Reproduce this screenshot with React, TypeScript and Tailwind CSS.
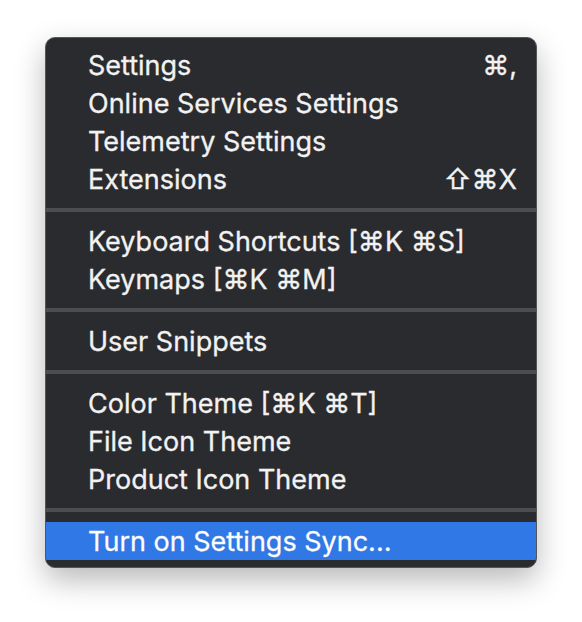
const groups: { label: string; shortcut?: string; active?: boolean }[][] = [
  [
    { label: 'Settings', shortcut: '⌘,' },
    { label: 'Online Services Settings' },
    { label: 'Telemetry Settings' },
    { label: 'Extensions', shortcut: '⇧⌘X' },
  ],
  [{ label: 'Keyboard Shortcuts [⌘K ⌘S]' }, { label: 'Keymaps [⌘K ⌘M]' }],
  [{ label: 'User Snippets' }],
  [{ label: 'Color Theme [⌘K ⌘T]' }, { label: 'File Icon Theme' }, { label: 'Product Icon Theme' }],
  [{ label: 'Turn on Settings Sync...', active: true }],
];

export default function App() {
  return (
    <div className="w-[582px] h-[622px] bg-white pt-[37px] pl-[45px] font-['Inter','DejaVu_Sans',sans-serif]">
      <div className="w-[492px] rounded-[10px] border border-[#55565a] bg-[#2a2b2f] pt-[8px] pb-[7px] shadow-[0_12px_30px_rgba(0,0,0,0.28)] overflow-hidden">
        {groups.map((group, gi) => (
          <div key={gi}>
            {gi > 0 && (
              <div className="pt-[10px] pb-[10px]">
                <div className="h-[4px] bg-[#4c4d51]" />
              </div>
            )}
            {group.map((item) => (
              <div
                key={item.label}
                className={`h-[38px] flex items-center justify-between pl-[42px] pr-[19px] text-[27px] leading-none text-[#f2f2f2] [-webkit-text-stroke:0.3px_#f2f2f2] ${
                  item.active ? 'bg-[#2f78e5] text-white' : ''
                }`}
              >
                <span>{item.label}</span>
                {item.shortcut && <span>{item.shortcut}</span>}
              </div>
            ))}
          </div>
        ))}
      </div>
    </div>
  );
}
